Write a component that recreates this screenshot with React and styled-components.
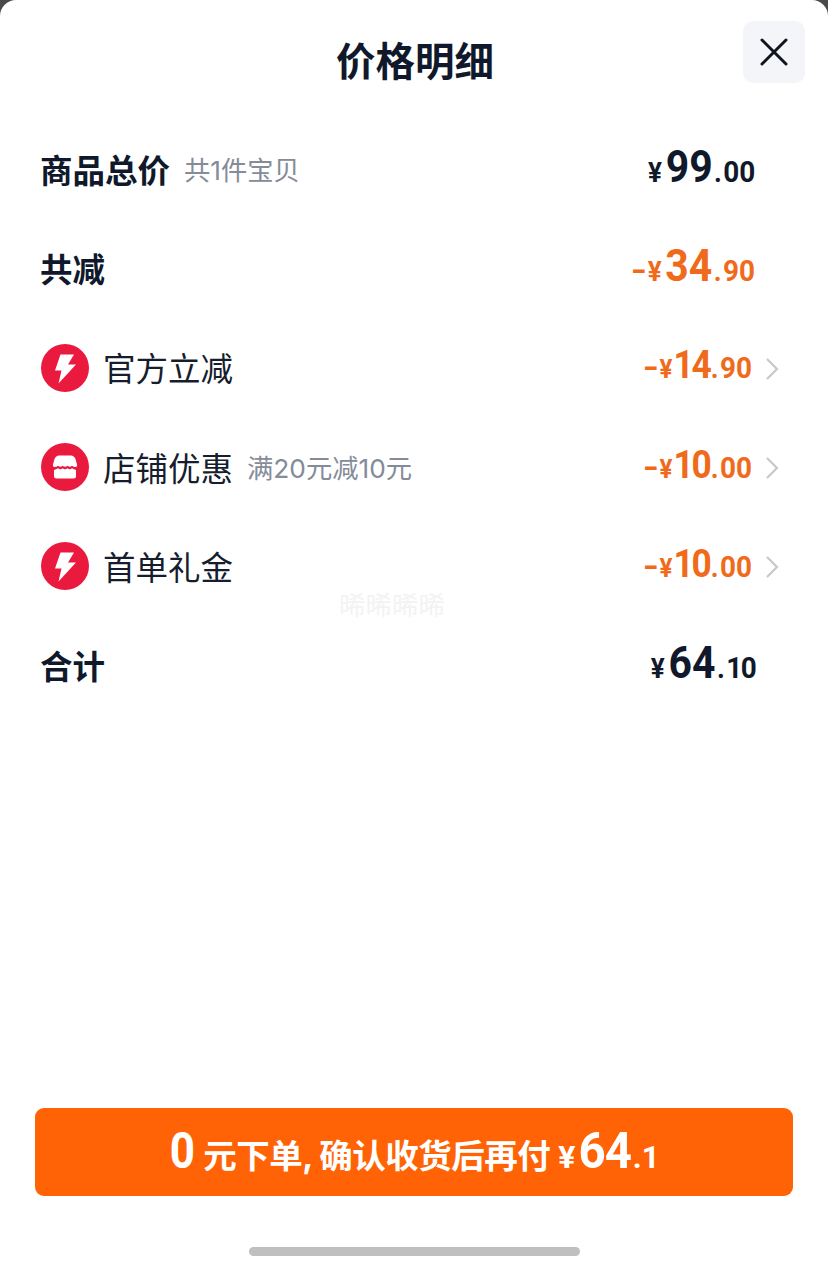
import styled, { createGlobalStyle } from "styled-components";

const GlobalStyle = createGlobalStyle`
  html, body {
    margin: 0;
    padding: 0;
    background: #4a4a4a;
  }
  body {
    font-family: "Inter", "Noto Sans CJK SC", sans-serif;
  }
`;

const rows = [
  { key: "total", label: "商品总价", note: "共1件宝贝", price: ["", "99", "00"], strong: true },
  { key: "off", label: "共减", price: ["-", "34", "90"], strong: true, orange: true },
  { key: "official", label: "官方立减", icon: "bolt", price: ["-", "14", "90"], orange: true, small: true },
  { key: "shop", label: "店铺优惠", icon: "shop", note: "满20元减10元", price: ["-", "10", "00"], orange: true, small: true },
  { key: "first", label: "首单礼金", icon: "bolt", price: ["-", "10", "00"], orange: true, small: true },
  { key: "sum", label: "合计", price: ["", "64", "10"], strong: true, tight: true },
];

function BoltIcon() {
  return (
    <svg width="48" height="48" viewBox="0 0 48 48">
      <circle cx="24" cy="24" r="24" fill="#ea1a3e" />
      <path d="M19.5 10.5H33L27 20.5H35L17.5 39.5L20.5 26.5H14Z" fill="#fff" />
    </svg>
  );
}

function ShopIcon() {
  return (
    <svg width="48" height="48" viewBox="0 0 48 48">
      <circle cx="24" cy="24" r="24" fill="#ea1a3e" />
      <path
        d="M18 12.5H30Q33 12.5 34.5 16L36 21.5Q36.5 24 34.5 24Q32.5 24 31 22.8Q28.8 24.8 26.6 22.8Q24 24.8 21.6 22.8Q19.4 24.8 17 22.8Q15.5 24 13.5 24Q11.5 24 12 21.5L13.5 16Q15 12.5 18 12.5Z"
        fill="#fff"
      />
      <path
        d="M13 27Q15 26.4 17 25.2Q19.4 27.2 21.6 25.2Q24 27.2 26.6 25.2Q28.8 27.2 31 25.2Q33 26.4 35 27V33Q35 35.5 32.5 35.5H15.5Q13 35.5 13 33Z"
        fill="#fff"
      />
    </svg>
  );
}

function Chevron() {
  return (
    <ChevronBox width="14" height="24" viewBox="0 0 14 24">
      <path d="M2 2L12 12L2 22" fill="none" stroke="#c8c8c8" strokeWidth="2.2" />
    </ChevronBox>
  );
}

export default function App() {
  return (
    <>
      <GlobalStyle />
      <Sheet>
        <Header>
          <Title>价格明细</Title>
          <CloseButton>
            <svg width="30" height="30" viewBox="0 0 30 30">
              <path d="M3 3L27 27M27 3L3 27" stroke="#10141f" strokeWidth="3" strokeLinecap="round" />
            </svg>
          </CloseButton>
        </Header>

        <List>
          {rows.map((row) => (
            <Row key={row.key}>
              {row.icon && <IconWrap>{row.icon === "bolt" ? <BoltIcon /> : <ShopIcon />}</IconWrap>}
              <Label $strong={row.strong}>{row.label}</Label>
              {row.note && <Note>{row.note}</Note>}
              <Price $orange={row.orange} $arrow={row.small}>
                {row.price[0] && <Minus>-</Minus>}
                <Yen $small={row.small}>¥</Yen>
                <Whole $small={row.small}>{row.price[1]}</Whole>
                <Dot>.</Dot>
                <Cents $tight={row.tight}>{row.price[2]}</Cents>
              </Price>
              {row.small && <Chevron />}
            </Row>
          ))}
        </List>

        <Watermark>晞晞晞晞</Watermark>

        <Footer>
          <PayButton>
            <PayZero>0</PayZero>
            <PayText>元下单, 确认收货后再付</PayText>
            <PayYen>¥</PayYen>
            <PayWhole>64</PayWhole>
            <PayCents>.1</PayCents>
          </PayButton>
          <HomeBar />
        </Footer>
      </Sheet>
    </>
  );
}

const Sheet = styled.div`
  position: relative;
  display: flex;
  flex-direction: column;
  width: 828px;
  height: 1272px;
  background: #fff;
  border-radius: 16px 16px 0 0;
  overflow: hidden;
`;

const Header = styled.header`
  position: relative;
  height: 120px;
  display: flex;
  align-items: center;
  justify-content: center;
`;

const Title = styled.h1`
  margin: 0;
  padding: 0 0 3px 2px;
  font-size: 39.5px;
  font-weight: 700;
  color: #10192b;
`;

const CloseButton = styled.div`
  position: absolute;
  top: 21px;
  right: 23px;
  width: 62px;
  height: 62px;
  border-radius: 10px;
  background: #f4f5f8;
  display: flex;
  align-items: center;
  justify-content: center;
`;

const List = styled.div`
  display: flex;
  flex-direction: column;
  padding: 0 41px 0 40px;
`;

const Row = styled.div`
  height: 99.2px;
  display: flex;
  align-items: center;
`;

const IconWrap = styled.span`
  width: 48px;
  height: 48px;
  margin: 0 14px 0 1px;
  display: flex;
`;

const Label = styled.span`
  padding-bottom: 2px;
  font-size: 32.5px;
  font-weight: ${(p) => (p.$strong ? 700 : 400)};
  color: ${(p) => (p.$strong ? "#10192b" : "#161d2d")};
`;

const Note = styled.span`
  margin-left: 14px;
  padding-bottom: 2px;
  font-size: 26.3px;
  color: #858b98;
`;

const Price = styled.div`
  margin-left: auto;
  display: flex;
  align-items: baseline;
  padding-bottom: 5px;
  margin-right: ${(p) => (p.$arrow ? "0" : "32px")};
  color: ${(p) => (p.$orange ? "#f06a1c" : "#10192b")};
  font-family: "Roboto", "Liberation Sans", sans-serif;
  font-weight: 700;
  transform: scaleX(0.93);
  transform-origin: right center;
`;

const Minus = styled.span`
  display: inline-block;
  font-size: 32px;
  margin-right: 3px;
  transform: scaleX(1.4);
`;

const Yen = styled.span`
  font-size: ${(p) => (p.$small ? "26px" : "28px")};
  margin-right: ${(p) => (p.$small ? "1px" : "4px")};
`;

const Whole = styled.span`
  font-size: ${(p) => (p.$small ? "38px" : "44px")};
  letter-spacing: ${(p) => (p.$small ? "-2.5px" : "0")};
`;

const Dot = styled.span`
  font-size: 29px;
  margin: 0 1.5px;
`;

const Cents = styled.span`
  font-size: 30px;
  letter-spacing: ${(p) => (p.$tight ? "-1.5px" : "0")};
`;

const ChevronBox = styled.svg`
  margin: 2px 8px 0 13px;
  flex-shrink: 0;
`;

const Watermark = styled.div`
  position: absolute;
  top: 590px;
  left: 339px;
  font-size: 26.5px;
  line-height: 30px;
  color: #f3f3f3;
`;

const Footer = styled.footer`
  margin-top: auto;
  display: flex;
  flex-direction: column;
  align-items: center;
  padding-bottom: 16px;
`;

const PayButton = styled.div`
  width: 758px;
  height: 88px;
  box-sizing: border-box;
  background: #ff6305;
  border-radius: 9px;
  display: flex;
  align-items: baseline;
  justify-content: center;
  padding-top: 14px;
  color: #fff;
  font-weight: 700;
`;

const PayZero = styled.span`
  display: inline-block;
  font-family: "Roboto", "Liberation Sans", sans-serif;
  font-size: 50px;
  margin-right: 6px;
  transform: scaleX(0.88);
`;

const PayText = styled.span`
  font-size: 33.5px;
  letter-spacing: -0.5px;
`;

const PayYen = styled.span`
  font-family: "Roboto", "Liberation Sans", sans-serif;
  font-size: 32px;
  margin: 0 2px 0 8px;
`;

const PayWhole = styled.span`
  display: inline-block;
  font-family: "Roboto", "Liberation Sans", sans-serif;
  font-size: 50px;
  letter-spacing: -1px;
  transform: scaleX(0.95);
`;

const PayCents = styled.span`
  font-family: "Roboto", "Liberation Sans", sans-serif;
  font-size: 31px;
`;

const HomeBar = styled.div`
  width: 331px;
  height: 9px;
  margin-top: 51px;
  border-radius: 5px;
  background: #bfbfbf;
`;
